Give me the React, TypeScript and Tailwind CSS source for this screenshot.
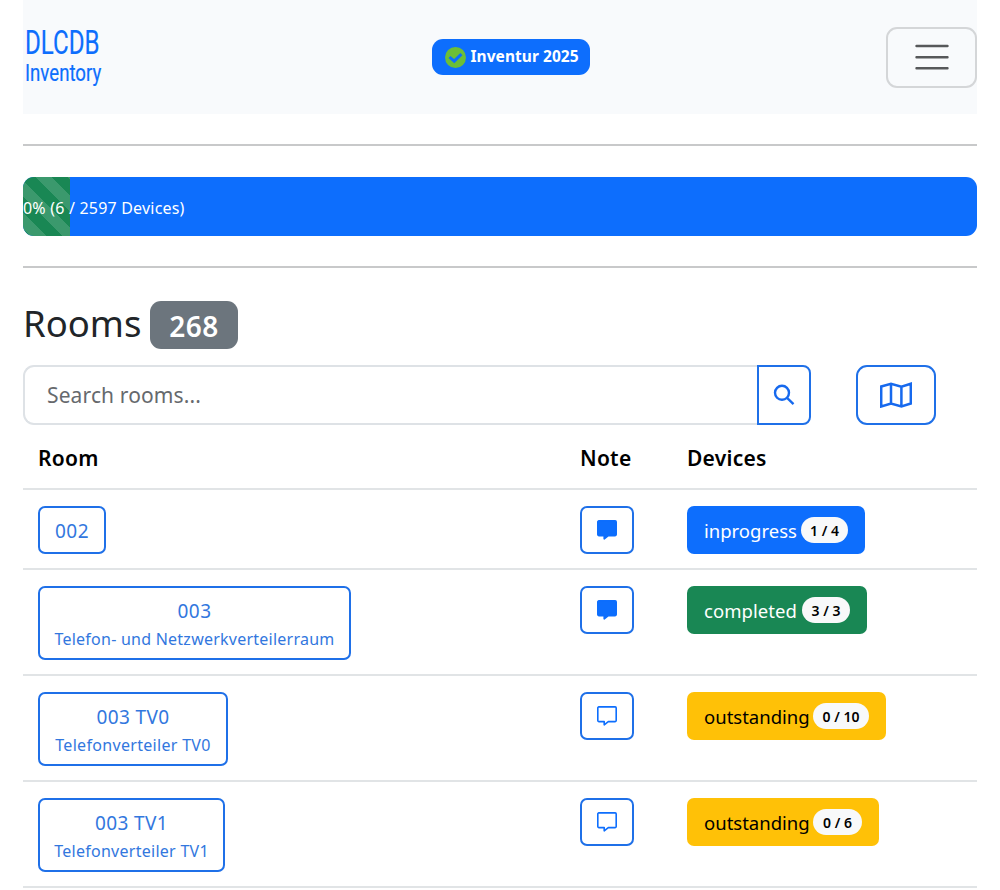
import React from 'react';

const rooms = [
  { name: '002', sub: '', width: 'w-[68px]', subStyle: '', full: true, status: 'inprogress', label: 'tracking-[0px] w-[93px]', count: '1 / 4', box: 'w-[178px] bg-[#0d6efd] text-white', pill: 'w-[47px]', row: 'h-[80px]' },
  { name: '003', sub: 'Telefon- und Netzwerkverteilerraum', width: 'w-[313px]', subStyle: 'tracking-[0.24px]', full: true, status: 'completed', label: 'tracking-[0.05px] w-[94px]', count: '3 / 3', box: 'w-[180px] bg-[#198754] text-white', pill: 'w-[48px]', row: 'h-[106px]' },
  { name: '003 TV0', sub: 'Telefonverteiler TV0', width: 'w-[190px]', subStyle: 'tracking-[0.31px]', full: false, status: 'outstanding', label: 'tracking-[0px] w-[105px]', count: '0 / 10', box: 'w-[199px] bg-[#ffc107] text-black', pill: 'w-[56px]', row: 'h-[106px]' },
  { name: '003 TV1', sub: 'Telefonverteiler TV1', width: 'w-[187px]', subStyle: 'tracking-[0.27px]', full: false, status: 'outstanding', label: 'tracking-[0px] w-[105px]', count: '0 / 6', box: 'w-[192px] bg-[#ffc107] text-black', pill: 'w-[49px]', row: 'h-[106px]' },
];

function Bubble({ full }: { full: boolean }) {
  return (
    <svg width="20" height="20" viewBox="0 0 20 20" fill={full ? '#0d6efd' : 'none'} stroke="#0d6efd" strokeWidth="1.6" strokeLinejoin="round">
      <path d="M1.8 .9h16.4a1 1 0 0 1 1 1v12.7a1 1 0 0 1-1 1h-6.9L7.2 18.8v-3.2H1.8a1 1 0 0 1-1-1V1.9a1 1 0 0 1 1-1Z" />
    </svg>
  );
}

export default function App() {
  return (
    <div className="h-[890px] overflow-hidden bg-white px-[23px] font-['Noto_Sans',sans-serif] text-[#212529]">
      <header className="flex h-[114px] items-center justify-between bg-[#f8fafc]">
        <div className="w-[158px] pl-[2px] font-['Roboto',sans-serif] text-[#0d6efd]">
          <div className="-mt-[2px] origin-left scale-x-[0.73] text-[33px] leading-[35px] [-webkit-text-stroke:0.2px_#0d6efd]">DLCDB</div>
          <div className="origin-left scale-x-[0.81] text-[23px] leading-[27px] [-webkit-text-stroke:0.2px_#0d6efd]">Inventory</div>
        </div>
        <div className="mr-[46px] flex h-[36px] w-[158px] items-center rounded-[11px] bg-[#0d6efd] pl-[13px] text-[15.5px] font-bold tracking-[0.05px] text-white">
          <svg width="21" height="21" viewBox="0 0 21 21" className="mr-[5px] shrink-0">
            <circle cx="10.5" cy="10.5" r="10.5" fill="#6cbe37" />
            <path d="m4.5 10 4.7 4.2 7.2-7" fill="none" stroke="#0d6efd" strokeWidth="3" />
          </svg>
          <span className="-mt-px whitespace-nowrap">Inventur 2025</span>
        </div>
        <button className="flex h-[61px] w-[91px] items-center justify-center rounded-[11px] border-2 border-[#d4d6d8]">
          <svg width="34" height="28" viewBox="0 0 34 28" stroke="#56585a" strokeWidth="2.4" strokeLinecap="round">
            <path d="M1.5 3h31M1.5 14.2h31M1.5 25.3h31" />
          </svg>
        </button>
      </header>
      <div className="mt-[30px] h-[2px] bg-[#c8c9ca]" />
      <div className="mt-[31px] flex h-[59px] items-center overflow-hidden rounded-[11px] bg-[#0d6efd]">
        <div className="flex h-full w-[47px] items-center whitespace-nowrap bg-[#198754] bg-[linear-gradient(45deg,rgba(255,255,255,.15)_25%,transparent_25%,transparent_50%,rgba(255,255,255,.15)_50%,rgba(255,255,255,.15)_75%,transparent_75%,transparent)] bg-[length:32px_32px] bg-[position:12px_0px] text-[16px] tracking-[0.2px] text-white">
          <span className="mt-[2px]">0% (6 / 2597 Devices)</span>
        </div>
      </div>
      <div className="mt-[30px] h-[2px] bg-[#c8c9ca]" />
      <div className="mt-[33px] flex h-[48px] items-center">
        <h1 className="-mt-[4px] w-[127px] whitespace-nowrap text-[36.5px] tracking-[0px]">Rooms</h1>
        <span className="flex h-[48px] w-[88px] items-center justify-center rounded-[11px] bg-[#6c757d] pt-[2px] text-[28px] font-semibold tracking-[0.5px] text-white">268</span>
      </div>
      <div className="mt-[16px] flex h-[60px]">
        <div className="flex w-[734px] items-center rounded-l-[11px] border-2 border-r-0 border-[#dee2e6] pl-[22px] pt-[2px] text-[21px] tracking-[0.12px] text-[#66696d]">Search rooms...</div>
        <button className="flex w-[54px] items-center justify-center rounded-r-[8px] border-2 border-[#1f70e8]">
          <svg width="22" height="22" viewBox="0 0 22 22" fill="none" stroke="#1669ee" strokeWidth="2.4"><circle cx="9" cy="8.8" r="7" /><path d="m13.8 13.7 6.7 6.5" /></svg>
        </button>
        <button className="ml-[45px] flex w-[80px] items-center justify-center rounded-[11px] border-2 border-[#1f70e8]">
          <svg width="32" height="26" viewBox="0 0 32 26" fill="none" stroke="#1669ee" strokeWidth="2.5"><path d="M1.2 4.5 11 1.7l10.4 3L30.8 1.7v19.8l-9.4 3-10.4-3-9.8 3ZM11 1.7v19.8M21.4 4.7v19.8" /></svg>
        </button>
      </div>
      <div className="grid h-[65px] grid-cols-[542px_107px_1fr] items-center border-b-2 border-[#e1e4e6] pl-[15px] pt-[4px] text-[21px] font-semibold tracking-[0.25px] text-black">
        <span>Room</span><span>Note</span><span>Devices</span>
      </div>
      {rooms.map((room) => (
        <div key={room.name} className={`grid grid-cols-[542px_107px_1fr] items-start border-b-2 border-[#e1e4e6] pl-[15px] pt-[16px] ${room.row}`}>
          <button className={`flex flex-col items-center justify-center whitespace-nowrap rounded-[7px] border-2 border-[#1f70e8] text-[#3277de] ${room.width} ${room.sub ? 'h-[74px] pt-[3px]' : 'h-[48px] pt-px'}`}>
            <span className="text-[19px] leading-[28px] tracking-[0.4px]">{room.name}</span>
            {room.sub && <span className={`text-[16px] leading-[28px] ${room.subStyle}`}>{room.sub}</span>}
          </button>
          <button className="flex h-[48px] w-[54px] items-center justify-center rounded-[7px] border-2 border-[#1f70e8]"><Bubble full={room.full} /></button>
          <div className={`flex h-[48px] items-center rounded-[7px] pl-[17px] ${room.box}`}>
            <span className={`mr-[4px] shrink-0 whitespace-nowrap pt-px text-[18.5px] ${room.label}`}>{room.status}</span>
            <span className={`flex h-[26px] shrink-0 items-center justify-center rounded-full bg-[#f8f9fa] text-[14px] font-semibold text-black ${room.pill}`}>{room.count}</span>
          </div>
        </div>
      ))}
    </div>
  );
}
